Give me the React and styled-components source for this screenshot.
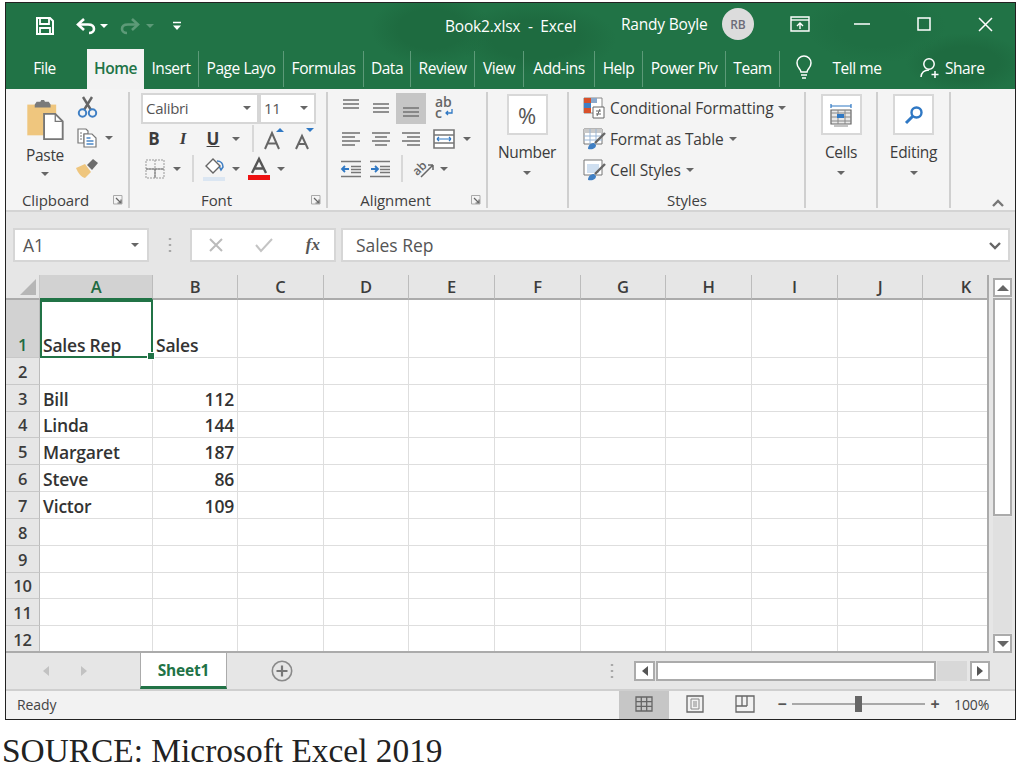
import React from 'react';
import styled, { createGlobalStyle } from 'styled-components';

const Global = createGlobalStyle`
  html, body { margin: 0; padding: 0; background: #fff; }
  body { font-family: "Open Sans", "Noto Sans", sans-serif; }
`;

const Page = styled.div`
  width: 1018px;
  height: 765px;
  overflow: hidden;
  padding: 2px 0 0 5px;
  box-sizing: border-box;
`;
const Win = styled.div`
  width: 1011px;
  height: 718px;
  box-sizing: border-box;
  border: 1px solid #222;
  display: flex;
  flex-direction: column;
  background: #f3f3f3;
  overflow: hidden;
`;
const Source = styled.div`
  font-family: "Liberation Serif", serif;
  font-size: 33.4px;
  line-height: 31px;
  color: #222;
  margin: 15px 0 0 -3px;
  white-space: nowrap;
`;

/* ---- title bar and tabs ---- */
const Header = styled.div`
  height: 86px;
  flex: none;
  color: #fff;
  background:
    radial-gradient(ellipse 60px 36px at 425px 26px, #1e6b40 55%, transparent 100%),
    radial-gradient(ellipse 80px 36px at 530px 36px, #1e6b40 55%, transparent 100%),
    radial-gradient(ellipse 70px 36px at 870px 24px, #1f6f43 55%, transparent 100%),
    radial-gradient(ellipse 60px 30px at 960px 60px, #1e6b40 55%, transparent 100%),
    #217346;
`;
const TitleBar = styled.div`
  height: 42px;
  box-sizing: border-box;
  padding-top: 4px;
  display: flex;
  align-items: center;
  position: relative;
`;
const TitleSlot = styled.div`
  width: ${p => p.$w}px;
  flex: none;
  display: flex;
  align-items: center;
  justify-content: ${p => p.$left ? 'flex-start' : 'center'};
  font-size: 15.5px;
  letter-spacing: -0.2px;
  white-space: nowrap;
  padding-left: ${p => p.$pad || 0}px;
  margin-top: ${p => p.$up ? -4 : 0}px;
  box-sizing: border-box;
`;
const Avatar = styled.div`
  width: 32px;
  height: 32px;
  margin-top: -4px;
  flex: none;
  border-radius: 50%;
  background: #dcdcdc;
  color: #6c6c78;
  font-size: 12px;
  font-weight: 600;
  display: flex;
  align-items: center;
  justify-content: center;
`;
const TabRow = styled.div`
  height: 44px;
  display: flex;
  align-items: flex-end;
`;
const Tab = styled.div`
  width: ${p => p.$w}px;
  flex: none;
  height: ${p => p.$active ? 40 : 36}px;
  margin-bottom: ${p => p.$active ? 0 : 2}px;
  padding-bottom: 2px;
  padding-right: ${p => p.$pr || 0}px;
  display: flex;
  align-items: center;
  justify-content: ${p => p.$start ? 'flex-start' : 'center'};
  gap: ${p => p.$gap || 0}px;
  box-sizing: border-box;
  font-size: 15.5px;
  letter-spacing: -0.45px;
  white-space: nowrap;
  overflow: hidden;
  background: ${p => p.$active ? '#f3f3f3' : 'transparent'};
  color: ${p => p.$active ? '#217346' : '#fff'};
  font-weight: ${p => p.$active ? 600 : 400};
  border-right: ${p => p.$div ? '1px solid #5c9a78' : 'none'};
`;

/* ---- ribbon ---- */
const Ribbon = styled.div`
  height: 123px;
  flex: none;
  display: flex;
  background: #f4f4f4;
  border-bottom: 2px solid #d4d4d4;
  box-sizing: border-box;
  color: #3c3c3c;
  position: relative;
`;
const Group = styled.div`
  width: ${p => p.$w}px;
  flex: none;
  height: 116px;
  margin-top: 3px;
  box-sizing: border-box;
  border-right: 2px solid #cfcfcf;
  display: flex;
  flex-direction: column;
  padding-left: ${p => p.$pad || 0}px;
`;
const GroupBody = styled.div`
  height: 98px;
  flex: none;
  display: flex;
  flex-direction: ${p => p.$row ? 'row' : 'column'};
`;
const GroupLabel = styled.div`
  height: 19px;
  display: flex;
  align-items: center;
  justify-content: space-between;
  font-size: 15px;
  font-weight: 500;
  letter-spacing: -0.1px;
  color: #404040;
  margin-left: ${p => p.$left || 0}px;
  padding-right: 5px;
  position: relative;
`;
const LabelText = styled.span`
  flex: 1;
  text-align: ${p => p.$center ? 'center' : 'left'};
  padding-right: ${p => p.$center ? 8 : 0}px;
`;
const ToolRow = styled.div`
  height: ${p => p.$h || 30}px;
  display: flex;
  align-items: center;
  margin-left: ${p => p.$left || 0}px;
`;
const Tool = styled.div`
  width: ${p => p.$w}px;
  height: ${p => p.$h ? p.$h + 'px' : '100%'};
  flex: none;
  display: flex;
  align-items: center;
  justify-content: center;
  font-size: 17px;
  font-weight: 700;
  position: relative;
  background: ${p => p.$on ? '#c6c6c6' : 'transparent'};
`;
const Divider = styled.div`
  width: 2px;
  height: 27px;
  background: #d8d8d8;
  flex: none;
`;
const Caret = styled.span`
  display: inline-block;
  width: 0;
  height: 0;
  flex: none;
  border-left: 4px solid transparent;
  border-right: 4px solid transparent;
  border-top: 4px solid ${p => p.$c || '#666'};
`;
const Combo = styled.div`
  width: ${p => p.$w}px;
  height: 31px;
  flex: none;
  box-sizing: border-box;
  background: #fff;
  border: 2px solid #d6d6d6;
  display: flex;
  align-items: center;
  justify-content: space-between;
  padding: 0 6px 0 3px;
  font-size: 15px;
  letter-spacing: -0.3px;
  color: #555;
`;
const BigCol = styled.div`
  width: ${p => p.$w}px;
  flex: none;
  display: flex;
  flex-direction: column;
  align-items: center;
`;
const PasteWrap = styled.div`
  display: flex;
  margin-top: 7px;
`;
const BigBox = styled.div`
  width: 41px;
  height: 41px;
  margin-top: 2px;
  box-sizing: border-box;
  background: #fff;
  border: 2px solid #d8d8d8;
  display: flex;
  align-items: center;
  justify-content: center;
  color: #555;
  font-size: 22px;
  font-weight: 500;
`;
const BigText = styled.div`
  font-size: 15.5px;
  letter-spacing: -0.3px;
  line-height: 20px;
  margin-top: ${p => p.$mt ?? 7}px;
  margin-bottom: ${p => p.$mb ?? 9}px;
  color: #3c3c3c;
`;
const StyleRow = styled.div`
  height: 31px;
  display: flex;
  align-items: center;
  gap: 5px;
  font-size: 15.5px;
  letter-spacing: -0.13px;
  color: #3c3c3c;
  white-space: nowrap;
`;
const AbStack = styled.div`
  width: 18px;
  font-size: 14px;
  line-height: 11px;
  font-weight: 600;
  color: #666;
  text-align: left;
  margin-bottom: 3px;
`;
const AbArrow = styled.div`
  position: absolute;
  left: 18px;
  top: 17px;
  display: flex;
`;
const Collapse = styled.div`
  position: absolute;
  right: 10px;
  bottom: 2px;
  color: #777;
  display: flex;
`;

/* ---- formula bar ---- */
const FormulaBar = styled.div`
  height: 63px;
  flex: none;
  background: #e6e6e6;
  display: flex;
  align-items: center;
  padding: 3px 5px 0 7px;
  box-sizing: border-box;
`;
const NameBox = styled.div`
  width: 136px;
  height: 34px;
  flex: none;
  box-sizing: border-box;
  background: #fff;
  border: 2px solid #d6d6d6;
  padding: 0 8px;
  display: flex;
  align-items: center;
  justify-content: space-between;
  font-size: 17.5px;
  letter-spacing: -0.05px;
  color: #555;
`;
const Grip = styled.div`
  width: 41px;
  flex: none;
  display: flex;
  justify-content: center;
`;
const FxBox = styled.div`
  width: 146px;
  height: 34px;
  flex: none;
  box-sizing: border-box;
  background: #fff;
  border: 2px solid #d6d6d6;
  display: flex;
  align-items: center;
  justify-content: space-between;
  padding: 0 14px 0 17px;
  margin-right: 5px;
`;
const FxGlyph = styled.span`
  font-family: "Liberation Serif", serif;
  font-style: italic;
  font-weight: 700;
  font-size: 17px;
  color: #555;
`;
const InputBox = styled(NameBox)`
  flex: 1;
  width: auto;
  padding: 0 6px 0 13px;
`;

/* ---- sheet ---- */
const SheetArea = styled.div`
  height: 378px;
  flex: none;
  display: flex;
  background: #e6e6e6;
`;
const Grid = styled.div`
  width: 983px;
  flex: none;
  display: grid;
  grid-template-columns: 34px 113px 85px 86px 85px 86px 86px 85px 86px 86px 85px 65px;
  grid-template-rows: 25px 58px repeat(11, 26.82px);
  height: 378px;
  box-sizing: border-box;
  border-right: 2px solid #ababab;
  border-bottom: 2px solid #ababab;
  font-size: 17.5px;
  letter-spacing: -0.2px;
  overflow: hidden;
`;
const Corner = styled.div`
  background: #e6e6e6;
  border-bottom: 2px solid #ababab;
  border-right: 1px solid #c8c8c8;
  position: relative;
  display: flex;
  align-items: flex-end;
  justify-content: flex-end;
  padding: 0 3px 3px 0;
`;
const ColHead = styled.div`
  background: ${p => p.$sel ? '#d2d2d2' : '#e6e6e6'};
  color: ${p => p.$sel ? '#1f6b42' : '#3c3c3c'};
  border-bottom: 2px solid ${p => p.$sel ? '#217346' : '#ababab'};
  border-right: 1px solid #bcbcbc;
  display: flex;
  align-items: center;
  justify-content: center;
  padding-left: ${p => p.$pl || 0}px;
  font-size: 16.5px;
  font-weight: 600;
`;
const RowHead = styled.div`
  background: ${p => p.$sel ? '#d2d2d2' : '#e6e6e6'};
  color: ${p => p.$sel ? '#1f6b42' : '#3c3c3c'};
  border-bottom: 1px solid #c8c8c8;
  border-right: 1px solid #bcbcbc;
  display: flex;
  align-items: flex-end;
  justify-content: center;
  padding-bottom: 1px;
  box-sizing: border-box;
  font-size: 16.5px;
  line-height: 23px;
  font-weight: 600;
`;
const Cell = styled.div`
  background: #fff;
  box-sizing: border-box;
  border-right: 1px solid #dedede;
  border-bottom: 1px solid #dedede;
  display: flex;
  align-items: flex-end;
  justify-content: ${p => p.$num ? 'flex-end' : 'flex-start'};
  padding: 0 3px 1px 3px;
  color: #333;
  font-weight: 600;
  white-space: nowrap;
  line-height: 22px;
`;
const SelCell = styled(Cell)`
  border: 2px solid #217346;
  padding: 0 1px 0 1px;
  position: relative;
  overflow: visible;
  &::after {
    content: '';
    position: absolute;
    right: -4px;
    bottom: -4px;
    width: 6px;
    height: 6px;
    background: #217346;
    border: 1px solid #fff;
  }
`;
const VScroll = styled.div`
  flex: 1;
  display: flex;
  flex-direction: column;
  padding: 3px 3px 0 4px;
  gap: 1px;
`;
const ScrollBtn = styled.div`
  height: ${p => p.$h || 19}px;
  width: ${p => p.$w || 'auto'};
  flex: none;
  box-sizing: border-box;
  background: #fff;
  border: 2px solid #ababab;
  display: flex;
  align-items: center;
  justify-content: center;
`;
const VThumb = styled(ScrollBtn)`
  height: 218px;
`;
const VTrack = styled.div`
  flex: 1;
  background: #e0e0e0;
`;
const UpTri = styled.span`
  width: 0;
  height: 0;
  border-left: 6px solid transparent;
  border-right: 6px solid transparent;
  border-bottom: 6px solid #666;
`;
const DownTri = styled(UpTri)`
  border-bottom: none;
  border-top: 6px solid #666;
`;
const LeftTri = styled.span`
  width: 0;
  height: 0;
  border-top: 5px solid transparent;
  border-bottom: 5px solid transparent;
  border-right: 6px solid ${p => p.$c || '#555'};
`;
const RightTri = styled(LeftTri)`
  border-right: none;
  border-left: 6px solid ${p => p.$c || '#555'};
`;

/* ---- sheet tabs ---- */
const TabsBar = styled.div`
  height: 38px;
  flex: none;
  background: #e6e6e6;
  display: flex;
  align-items: center;
  box-sizing: border-box;
  border-bottom: 2px solid #cfcfcf;
`;
const NavArrows = styled.div`
  width: 134px;
  flex: none;
  display: flex;
  gap: 32px;
  justify-content: center;
  padding-right: 16px;
  box-sizing: border-box;
`;
const SheetTab = styled.div`
  width: 87px;
  height: 36px;
  flex: none;
  box-sizing: border-box;
  background: #fff;
  color: #217346;
  font-weight: 700;
  font-size: 15.5px;
  letter-spacing: -0.2px;
  border-left: 1px solid #ababab;
  border-right: 1px solid #ababab;
  border-bottom: 3px solid #217346;
  display: flex;
  align-items: center;
  justify-content: center;
`;
const AddSheet = styled.div`
  width: 110px;
  flex: none;
  display: flex;
  justify-content: center;
`;
const HScroll = styled.div`
  width: 356px;
  flex: none;
  height: 20px;
  margin-left: 20px;
  display: flex;
  gap: 1px;
`;
const HThumb = styled(ScrollBtn)`
  width: 280px;
  height: 20px;
`;
const HTrack = styled.div`
  flex: 1;
  background: #d8d8d8;
  margin-right: 2px;
`;
const GripSlot = styled.div`
  width: 277px;
  flex: none;
  display: flex;
  justify-content: flex-end;
  box-sizing: border-box;
`;

/* ---- status bar ---- */
const StatusBar = styled.div`
  flex: 1;
  background: #f2f2f2;
  display: flex;
  align-items: center;
  padding-bottom: 2px;
  font-size: 14px;
  color: #444;
  letter-spacing: -0.1px;
`;
const Ready = styled.div`
  width: 613px;
  flex: none;
  padding-left: 11px;
  box-sizing: border-box;
`;
const ViewBtn = styled.div`
  width: ${p => p.$w}px;
  align-self: stretch;
  margin-bottom: -2px;
  padding-bottom: 2px;
  flex: none;
  display: flex;
  align-items: center;
  justify-content: center;
  background: ${p => p.$on ? '#c6c6c6' : 'transparent'};
`;
const ZoomSlider = styled.div`
  width: 133px;
  height: 2px;
  margin: 0 4px;
  background: #a8a8a8;
  position: relative;
  flex: none;
  &::after {
    content: '';
    position: absolute;
    left: 63px;
    top: -7px;
    width: 7px;
    height: 16px;
    background: #666;
  }
`;
const ZoomSign = styled.div`
  width: 12px;
  flex: none;
  text-align: center;
  font-weight: 700;
  color: #555;
  font-size: 16px;
  margin-left: ${p => p.$ml || 0}px;
`;
const ZoomText = styled.div`
  margin-left: 13px;
  font-size: 14px;
`;

/* ---- icons ---- */
const Ic = ({ w = 20, h = 20, vb, children, style }) => (
  <svg width={w} height={h} viewBox={vb || `0 0 ${w} ${h}`} fill="none" style={{ overflow: 'visible', ...style }}>{children}</svg>
);
const Lines = ({ y, x = [2, 2, 2], x2 = [18, 18, 18], c = '#777' }) => (
  <>{y.map((v, i) => <path key={i} d={`M${x[i]} ${v}H${x2[i]}`} stroke={c} strokeWidth="1.6" />)}</>
);

const Launcher = () => (
  <Ic w={10} h={10}>
    <path d="M.5.5h8.5v8.5H.5z" fill="none" stroke="#aaa" />
    <path d="M3 3l5 5M8 4.5V8H4.5" stroke="#666" strokeWidth="1.2" />
  </Ic>
);
const SaveIcon = () => (
  <Ic w={20} h={20}>
    <path d="M2 2h13l3 3v13H2z" stroke="#fff" strokeWidth="2" />
    <path d="M5 2v6h9V2M5 18v-6h10v6" stroke="#fff" strokeWidth="1.8" />
  </Ic>
);
const UndoIcon = ({ c = '#fff', flip }) => (
  <Ic w={22} h={18} style={flip ? { transform: 'scaleX(-1)' } : undefined}>
    <path d="M9 2L3 7.5l6 5.5" stroke={c} strokeWidth="2.6" />
    <path d="M4 7.5h9c4.5 0 6 2.4 6 4.5s-2 4-5 4" stroke={c} strokeWidth="2.6" />
  </Ic>
);
const Customize = () => (
  <Ic w={10} h={10}>
    <path d="M1 1.5h8" stroke="#fff" strokeWidth="1.5" />
    <path d="M1 4.5h8L5 9z" fill="#fff" />
  </Ic>
);
const RestoreIcon = () => (
  <Ic w={20} h={16}>
    <path d="M1 1h18v14H1z" stroke="#fff" strokeWidth="1.4" />
    <path d="M1 4h18" stroke="#fff" strokeWidth="1.4" />
    <path d="M10 13V7M7 10l3-3 3 3" stroke="#fff" strokeWidth="1.4" />
  </Ic>
);
const Bulb = () => (
  <Ic w={18} h={26}>
    <path d="M6 17c0-3-4-4-4-9a7 7 0 0114 0c0 5-4 6-4 9z" stroke="#fff" strokeWidth="1.5" />
    <path d="M6 20h6M7 23h4" stroke="#fff" strokeWidth="1.5" />
  </Ic>
);
const ShareIcon = () => (
  <Ic w={22} h={22}>
    <circle cx="9" cy="7" r="5.2" stroke="#fff" strokeWidth="1.5" />
    <path d="M1 20c.5-5 3.500-7 8-7" stroke="#fff" strokeWidth="1.5" />
    <path d="M15 14v7M11.500 17.500h7" stroke="#fff" strokeWidth="1.5" />
  </Ic>
);
const PasteIcon = () => (
  <Ic w={38} h={41} vb="0 0 40 44">
    <path d="M1 6h31v33H1z" fill="#efc67e" />
    <path d="M9 6l2-3h4l1-2h3l1 2h4l2 3v3H9z" fill="#7a7a7a" />
    <path d="M19 16h12l8 8v19H19z" fill="#fff" stroke="#777" strokeWidth="2" />
    <path d="M31 16v8h8" stroke="#777" strokeWidth="1.4" />
  </Ic>
);
const CutIcon = () => (
  <Ic w={21} h={22}>
    <path d="M6 1l8 13M15 1L7 14" stroke="#666" strokeWidth="2.4" />
    <circle cx="5.500" cy="17" r="3.700" stroke="#3f7fc4" strokeWidth="2" />
    <circle cx="15.500" cy="17" r="3.700" stroke="#3f7fc4" strokeWidth="2" />
  </Ic>
);
const CopyIcon = () => (
  <Ic w={20} h={20}>
    <path d="M1 1h8l2 2v3H7v9H1z" fill="#fff" stroke="#777" strokeWidth="1.2" />
    <path d="M7 6h8l4 4v9H7z" fill="#fff" stroke="#777" strokeWidth="1.2" />
    <path d="M9.500 10h4M9.500 13h7M9.500 16h7" stroke="#4a86c6" strokeWidth="1.3" />
    <path d="M3 5h2M3 8h2M3 11h2" stroke="#777" />
  </Ic>
);
const BrushIcon = () => (
  <Ic w={22} h={20}>
    <path d="M0 9l9-4 6 8-6 6c-4-1-7-5-9-10z" fill="#efc67e" />
    <path d="M11 6l6-6 5 4-6 7z" fill="#6c6c6c" />
  </Ic>
);
const BorderIcon = () => (
  <Ic w={20} h={20}>
    <path d="M1 1h18v18H1zM10 1v18M1 10h18" stroke="#999" strokeDasharray="2 1" />
    <path d="M1 10h18M10 10v9" stroke="#777" />
  </Ic>
);
const FillIcon = () => (
  <Ic w={22} h={24}>
    <path d="M3 9l7-7 7 7-7 7z" fill="#fff" stroke="#666" strokeWidth="1.4" />
    <path d="M14 4c4 0 6 3 6 6l-2 3-1.500-3" stroke="#3f7fc4" strokeWidth="1.600" />
    <path d="M0 20h22v4H0z" fill="#dbe6f2" />
  </Ic>
);
const FontColor = () => (
  <Ic w={22} h={22}>
    <path d="M4 15L11 1l7 14M6.500 10.500h9" stroke="#555" strokeWidth="2.400" />
    <path d="M0 17h22v5H0z" fill="#e11" />
  </Ic>
);
const GrowA = ({ big, c }) => (
  <Ic w={22} h={22}>
    <path d={big ? 'M2 21L9 5l7 16M4.500 15.500h9' : 'M3 21L9 8l6 13M5 16h8'} stroke="#666" strokeWidth="2" />
    <path d={big ? 'M13 4h8l-4-4z' : 'M13 0h8l-4 4z'} fill={c} />
  </Ic>
);
const MergeIcon = () => (
  <Ic w={22} h={20}>
    <path d="M1 1h20v18H1z" fill="#fff" stroke="#777" strokeWidth="1.600" />
    <path d="M1 6h20M1 14h20" stroke="#777" strokeWidth="1.400" />
    <path d="M4 10h14M4 10l2-2M4 10l2 2M18 10l-2-2M18 10l-2 2" stroke="#2f78c4" strokeWidth="1.200" />
  </Ic>
);
const IndentIcon = ({ rev }) => (
  <Ic w={20} h={18}>
    <path d="M0 1.500h20M0 16.500h20M10 6.500h10M10 9.500h10M10 12.500h10" stroke="#777" strokeWidth="1.500" />
    <path d={rev ? 'M8 9H1M4 6l-3 3 3 3' : 'M1 9h7M5 6l3 3-3 3'} stroke="#2f78c4" strokeWidth="1.800" />
  </Ic>
);
const OrientIcon = () => (
  <Ic w={24} h={22}>
    <text x="1" y="16" fontSize="12" fontFamily="Open Sans" fontWeight="600" fill="#666" transform="rotate(-45 6 12)">ab</text>
    <path d="M9 19l12-12M21 7h-5M21 7v5" stroke="#666" strokeWidth="1.500" />
  </Ic>
);
const CondIcon = () => (
  <Ic w={22} h={22}>
    <path d="M1 1h18v15H1z" fill="#fff" stroke="#888" />
    <path d="M1 1h7v5H1z" fill="#d8502a" />
    <path d="M8 1h6v5H8z" fill="#8aa8cc" />
    <path d="M1 6h7v5H1z" fill="#3f7fc4" />
    <path d="M1 11h7v5H1z" fill="#d8502a" />
    <path d="M10 10h11v11H10z" fill="#fff" stroke="#666" />
    <path d="M13 14h5M13 17h5M17 12l-3 7" stroke="#666" />
  </Ic>
);
const TableIcon = ({ cell }) => (
  <Ic w={22} h={22}>
    <path d="M1 1h18v15H1z" fill="#fff" stroke="#777" />
    {cell ? <path d="M4 5h12v9H4z" fill="#cfdff0" /> : <path d="M1 1h18v4H1z" fill="#c9c9c9" />}
    {!cell && <path d="M7 1v15M13 1v15M1 8h18M1 12h18" stroke="#9ab6d6" />}
    <path d="M22 5L12 15" stroke="#666" strokeWidth="2.400" />
    <path d="M5 21c0-4 3-6 6-6l2 2c0 3-3 5-8 4z" fill="#3f7fc4" />
  </Ic>
);
const CellsIcon = () => (
  <Ic w={22} h={24}>
    <path d="M1 1v4M21 1v4M1 3h20" stroke="#2f78c4" strokeWidth="1.200" />
    <path d="M1 7h20v14H1z" fill="#e8e8e8" stroke="#666" strokeWidth="1.200" />
    <path d="M1 10h20M1 14h20M1 18h20M8 7v14M15 7v14" stroke="#888" />
    <path d="M7 11h7v4H7z" fill="#2f78c4" />
    <path d="M4 23h14" stroke="#888" />
  </Ic>
);
const SearchIcon = () => (
  <Ic w={20} h={20}>
    <circle cx="12.500" cy="7.500" r="5" stroke="#2f78c4" strokeWidth="2.400" />
    <path d="M8.500 11.500L2 18" stroke="#2f78c4" strokeWidth="3" />
  </Ic>
);
const ChevUp = () => (
  <Ic w={14} h={9}><path d="M2 7l5-5 5 5" stroke="#777" strokeWidth="2.400" /></Ic>
);
const ChevDown = () => (
  <Ic w={14} h={9}><path d="M2 2l5 5 5-5" stroke="#666" strokeWidth="2.400" /></Ic>
);
const GripDots = () => (
  <Ic w={4} h={16}>
    <path d="M2 1v2M2 7v2M2 13v2" stroke="#a8a8a8" strokeWidth="2.400" />
  </Ic>
);
const PlusCircle = () => (
  <Ic w={22} h={22}>
    <circle cx="11" cy="11" r="9.700" stroke="#8a8a8a" strokeWidth="1.600" />
    <path d="M11 5.500v11M5.500 11h11" stroke="#777" strokeWidth="2.200" />
  </Ic>
);
const GridView = () => (
  <Ic w={18} h={16}>
    <path d="M1 1h16v14H1zM1 5.700h16M1 10.300h16M6.300 1v14M11.700 1v14" stroke="#666" strokeWidth="1.300" />
  </Ic>
);
const PageView = () => (
  <Ic w={18} h={18}>
    <path d="M1 1h16v16H1z" stroke="#666" strokeWidth="1.300" />
    <path d="M5 4h8v10H5zM7 7h4M7 9h4M7 11h4" stroke="#888" />
  </Ic>
);
const BreakView = () => (
  <Ic w={20} h={18}>
    <path d="M1 1h18v16H1zM1 11h11M12 1v10M7 1v10" stroke="#666" strokeWidth="1.300" />
  </Ic>
);

const Triple = ({ y }) => <Ic w={20} h={20}><Lines y={y} /></Ic>;

/* ---- data ---- */
const tabs = [
  ['Insert', 55], ['Page Layo', 85], ['Formulas', 80], ['Data', 47],
  ['Review', 64], ['View', 49], ['Add-ins', 71], ['Help', 48],
  ['Power Piv', 83], ['Team', 54],
];
const cols = ['A', 'B', 'C', 'D', 'E', 'F', 'G', 'H', 'I', 'J', 'K'];
const rows = {
  1: ['Sales Rep', 'Sales'],
  3: ['Bill', 112],
  4: ['Linda', 144],
  5: ['Margaret', 187],
  6: ['Steve', 86],
  7: ['Victor', 109],
};
const rowNums = [1, 2, 3, 4, 5, 6, 7, 8, 9, 10, 11, 12];

const App = () => (
  <Page>
    <Global />
    <Win>
      <Header>
        <TitleBar>
          <TitleSlot $w={29} />
          <TitleSlot $w={20}><SaveIcon /></TitleSlot>
          <TitleSlot $w={20} />
          <TitleSlot $w={22}><UndoIcon /></TitleSlot>
          <TitleSlot $w={13}><Caret $c="#fff" /></TitleSlot>
          <TitleSlot $w={9} />
          <TitleSlot $w={22}><UndoIcon c="#5d9a78" flip /></TitleSlot>
          <TitleSlot $w={18}><Caret $c="#5d9a78" /></TitleSlot>
          <TitleSlot $w={13} />
          <TitleSlot $w={10}><Customize /></TitleSlot>
          <TitleSlot $w={263} />
          <TitleSlot $w={176} $left>Book2.xlsx&nbsp;&nbsp;-&nbsp;&nbsp;Excel</TitleSlot>
          <TitleSlot $w={101} $left $up>Randy Boyle</TitleSlot>
          <Avatar>RB</Avatar>
          <TitleSlot $w={72} $pad={20} $up><RestoreIcon /></TitleSlot>
          <TitleSlot $w={72} $up><Ic w={16} h={4}><path d="M0 2h16" stroke="#fff" strokeWidth="1.500" /></Ic></TitleSlot>
          <TitleSlot $w={52} $up><Ic w={14} h={14}><path d="M1 1h12v12H1z" stroke="#fff" strokeWidth="1.500" /></Ic></TitleSlot>
          <TitleSlot $w={65} $pad={5} $up><Ic w={15} h={15}><path d="M1 1l13 13M14 1L1 14" stroke="#fff" strokeWidth="1.500" /></Ic></TitleSlot>
        </TitleBar>
        <TabRow>
          <Tab $w={81} $pr={4}>File</Tab>
          <Tab $w={57} $active>Home</Tab>
          {tabs.map(([t, w]) => <Tab key={t} $w={w} $div>{t}</Tab>)}
          <Tab $w={48}><Bulb /></Tab>
          <Tab $w={58}>Tell me</Tab>
          <Tab $w={34} />
          <Tab $w={79} $gap={3} $start><ShareIcon />Share</Tab>
        </TabRow>
      </Header>

      <Ribbon>
        <Group $w={124}>
          <GroupBody $row>
            <BigCol $w={78}>
              <PasteWrap><PasteIcon /></PasteWrap>
              <BigText $mt={5} $mb={7}>Paste</BigText>
              <Caret />
            </BigCol>
            <div>
              <ToolRow $h={30} $left={-9}><Tool $w={24}><CutIcon /></Tool></ToolRow>
              <ToolRow $h={32} $left={-9}><Tool $w={24}><CopyIcon /></Tool><Tool $w={20}><Caret /></Tool></ToolRow>
              <ToolRow $h={30} $left={-9}><Tool $w={24}><BrushIcon /></Tool></ToolRow>
            </div>
          </GroupBody>
          <GroupLabel $left={16}><LabelText>Clipboard</LabelText><Launcher /></GroupLabel>
        </Group>

        <Group $w={198}>
          <GroupBody>
            <ToolRow $h={32} $left={11}>
              <Combo $w={118}>Calibri<Caret /></Combo>
              <Combo $w={57}>11<Caret /></Combo>
            </ToolRow>
            <ToolRow $h={29} $left={10}>
              <Tool $w={28}>B</Tool>
              <Tool $w={30} style={{ fontFamily: 'Liberation Serif', fontStyle: 'italic' }}>I</Tool>
              <Tool $w={30} style={{ textDecoration: 'underline' }}>U</Tool>
              <Tool $w={16}><Caret /></Tool>
              <Tool $w={8} />
              <Divider />
              <Tool $w={9} />
              <GrowA big c="#2f78c4" />
              <Tool $w={8} />
              <GrowA c="#2f78c4" />
            </ToolRow>
            <ToolRow $h={31} $left={15}>
              <Tool $w={20}><BorderIcon /></Tool>
              <Tool $w={23}><Caret /></Tool>
              <Tool $w={4} />
              <Divider />
              <Tool $w={9} />
              <Tool $w={22}><FillIcon /></Tool>
              <Tool $w={22}><Caret /></Tool>
              <Tool $w={1} />
              <Tool $w={22}><FontColor /></Tool>
              <Tool $w={22}><Caret /></Tool>
            </ToolRow>
          </GroupBody>
          <GroupLabel><LabelText $center>Font</LabelText><Launcher /></GroupLabel>
        </Group>

        <Group $w={160}>
          <GroupBody>
            <ToolRow $h={32} $left={8}>
              <Tool $w={30}><Triple y={[2, 6, 10]} /></Tool>
              <Tool $w={30}><Triple y={[6, 10, 14]} /></Tool>
              <Tool $w={30} $on $h={31}><Triple y={[10, 14, 18]} /></Tool>
              <Tool $w={36}>
                <AbStack>ab c</AbStack>
                <AbArrow>
                  <Ic w={9} h={8}><path d="M8 0v4H2M4 2L2 4l2 2" stroke="#2f78c4" strokeWidth="1.300" /></Ic>
                </AbArrow>
              </Tool>
            </ToolRow>
            <ToolRow $h={29} $left={8}>
              <Tool $w={30}><Ic w={20} h={20}><Lines y={[4, 8, 12, 16]} x={[1, 1, 1, 1]} x2={[19, 14, 19, 14]} /></Ic></Tool>
              <Tool $w={30}><Ic w={20} h={20}><Lines y={[4, 8, 12, 16]} x={[1, 4, 1, 4]} x2={[19, 16, 19, 16]} /></Ic></Tool>
              <Tool $w={29}><Ic w={20} h={20}><Lines y={[4, 8, 12, 16]} x={[1, 6, 1, 6]} x2={[19, 19, 19, 19]} /></Ic></Tool>
              <Tool $w={37}><MergeIcon /></Tool>
              <Tool $w={10}><Caret /></Tool>
            </ToolRow>
            <ToolRow $h={31} $left={8}>
              <Tool $w={30}><IndentIcon rev /></Tool>
              <Tool $w={28}><IndentIcon /></Tool>
              <Tool $w={7} />
              <Divider />
              <Tool $w={9} />
              <Tool $w={24}><OrientIcon /></Tool>
              <Tool $w={16}><Caret /></Tool>
            </ToolRow>
          </GroupBody>
          <GroupLabel><LabelText $center>Alignment</LabelText><Launcher /></GroupLabel>
        </Group>

        <Group $w={81}>
          <BigCol $w={78}>
            <BigBox>%</BigBox>
            <BigText>Number</BigText>
            <Caret />
          </BigCol>
        </Group>

        <Group $w={237} $pad={14}>
          <GroupBody>
            <StyleRow><CondIcon />Conditional Formatting<Caret /></StyleRow>
            <StyleRow><TableIcon />Format as Table<Caret /></StyleRow>
            <StyleRow><TableIcon cell />Cell Styles<Caret /></StyleRow>
          </GroupBody>
          <GroupLabel><LabelText $center>Styles</LabelText></GroupLabel>
        </Group>

        <Group $w={72}>
          <BigCol $w={70}>
            <BigBox><CellsIcon /></BigBox>
            <BigText>Cells</BigText>
            <Caret />
          </BigCol>
        </Group>

        <Group $w={73}>
          <BigCol $w={71}>
            <BigBox><SearchIcon /></BigBox>
            <BigText>Editing</BigText>
            <Caret />
          </BigCol>
        </Group>
        <Collapse><ChevUp /></Collapse>
      </Ribbon>

      <FormulaBar>
        <NameBox>A1<Caret /></NameBox>
        <Grip><GripDots /></Grip>
        <FxBox>
          <Ic w={14} h={14}><path d="M1 1l12 12M13 1L1 13" stroke="#bbb" strokeWidth="2" /></Ic>
          <Ic w={18} h={14}><path d="M1 7l5 6L17 1" stroke="#c4c4c4" strokeWidth="2" /></Ic>
          <FxGlyph>fx</FxGlyph>
        </FxBox>
        <InputBox>Sales Rep<ChevDown /></InputBox>
      </FormulaBar>

      <SheetArea>
        <Grid>
          <Corner>
            <Ic w={16} h={16}><path d="M16 0v16H0z" fill="#b6b6b6" /></Ic>
          </Corner>
          {cols.map((c, i) => (
            <ColHead key={c} $sel={i === 0} $pl={c === 'K' ? 22 : 0}>{c}</ColHead>
          ))}
          {rowNums.map(r => (
            <React.Fragment key={r}>
              <RowHead $sel={r === 1}>{r}</RowHead>
              {cols.map((c, i) => {
                const v = rows[r] && rows[r][i];
                const C = r === 1 && i === 0 ? SelCell : Cell;
                return <C key={c} $num={typeof v === 'number'}>{v}</C>;
              })}
            </React.Fragment>
          ))}
        </Grid>
        <VScroll>
          <ScrollBtn><UpTri /></ScrollBtn>
          <VThumb />
          <VTrack />
          <ScrollBtn><DownTri /></ScrollBtn>
        </VScroll>
      </SheetArea>

      <TabsBar>
        <NavArrows>
          <LeftTri $c="#c2c2c2" />
          <RightTri $c="#c2c2c2" />
        </NavArrows>
        <SheetTab>Sheet1</SheetTab>
        <AddSheet><PlusCircle /></AddSheet>
        <GripSlot><GripDots /></GripSlot>
        <HScroll>
          <ScrollBtn $w="21px" $h={20}><LeftTri /></ScrollBtn>
          <HThumb />
          <HTrack />
          <ScrollBtn $w="20px" $h={20}><RightTri /></ScrollBtn>
        </HScroll>
      </TabsBar>

      <StatusBar>
        <Ready>Ready</Ready>
        <ViewBtn $w={50} $on><GridView /></ViewBtn>
        <ViewBtn $w={51}><PageView /></ViewBtn>
        <ViewBtn $w={50}><BreakView /></ViewBtn>
        <ZoomSign $ml={6}>−</ZoomSign>
        <ZoomSlider />
        <ZoomSign>+</ZoomSign>
        <ZoomText>100%</ZoomText>
      </StatusBar>
    </Win>
    <Source>SOURCE: Microsoft Excel 2019</Source>
  </Page>
);

export default App;
